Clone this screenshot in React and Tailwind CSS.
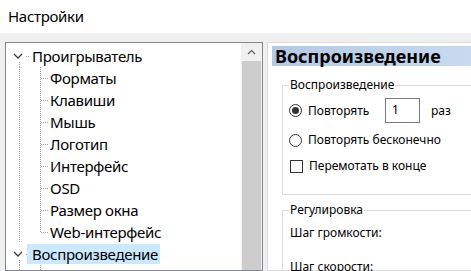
import React from 'react';

const font = { fontFamily: '"Noto Sans", "Open Sans", sans-serif' };

const dot = '#a0a0a0';

// tree gutter for the top-level nodes: chevron + dotted stub
function RootGutter({ last }) {
  return (
    <svg width="26" height="22" className="shrink-0">
      <path d="M8 9 L12 13 L16 9" fill="none" stroke="#404040" strokeWidth="1.3" />
      <line x1="20" y1="11.5" x2="24" y2="11.5" stroke={dot} strokeDasharray="1 1" />
      {!last && <line x1="13.5" y1="17" x2="13.5" y2="22" stroke={dot} strokeDasharray="1 1" />}
    </svg>
  );
}

// tree gutter for children: parent line + own branch
function ChildGutter({ last }) {
  return (
    <svg width="44" height="22" className="shrink-0">
      <line x1="13.5" y1="0" x2="13.5" y2="22" stroke={dot} strokeDasharray="1 1" />
      <line x1="34.5" y1="0" x2="34.5" y2={last ? 11 : 22} stroke={dot} strokeDasharray="1 1" />
      <line x1="35" y1="11.5" x2="43" y2="11.5" stroke={dot} strokeDasharray="1 1" />
    </svg>
  );
}

function TreeRow({ label, root, last, selected }) {
  return (
    <div className="flex h-[22px] items-center">
      {root ? <RootGutter last={last} /> : <ChildGutter last={last} />}
      <span className={`h-[20px] flex items-center pr-[2px] whitespace-nowrap text-[15px] tracking-[-0.3px] text-black ${selected ? 'bg-[#cce8ff] pl-[5px] -ml-[5px]' : ''}`}>
        {label}
      </span>
    </div>
  );
}

function Radio({ checked }) {
  return (
    <span className="w-[13px] h-[13px] rounded-full border border-[#333] bg-white flex items-center justify-center shrink-0">
      {checked && <span className="w-[7px] h-[7px] rounded-full bg-[#333]" />}
    </span>
  );
}

export default function App() {
  const players = ['Форматы', 'Клавиши', 'Мышь', 'Логотип', 'Интерфейс', 'OSD', 'Размер окна', 'Web-интерфейс'];

  return (
    <div className="w-[471px] h-[271px] overflow-hidden bg-[#f0f0f0] flex flex-col" style={font}>
      {/* Title */}
      <div className="h-[33px] bg-white flex items-center pl-[8px] shrink-0">
        <span className="text-[15px] tracking-[-0.3px] text-black">Настройки</span>
      </div>

      <div className="flex flex-1 pt-[9px] pl-[5px] gap-[4px] min-h-0">
        {/* Tree */}
        <div className="w-[258px] shrink-0 border border-[#828790] bg-white flex">
          <div className="flex-1 pt-[2px] overflow-hidden">
            <TreeRow label="Проигрыватель" root />
            {players.map((p, i) => (
              <TreeRow key={p} label={p} last={i === players.length - 1} />
            ))}
            <TreeRow label="Воспроизведение" root selected />
            <TreeRow label="DVD-Video" />
          </div>
          <div className="w-[21px] bg-[#f0f0f0] flex flex-col shrink-0">
            <div className="h-[18px] flex items-center justify-center">
              <svg width="9" height="6">
                <path d="M1 5 L4.5 1.5 L8 5" fill="none" stroke="#606060" strokeWidth="1.2" />
              </svg>
            </div>
            <div className="flex-1 mx-[1px] bg-[#cdcdcd]" />
          </div>
        </div>

        {/* Page */}
        <div className="flex-1 border border-[#dcdcdc] border-r-0 bg-white pt-[3px] pl-[4px] min-w-0">
          <div className="h-[20px] bg-gradient-to-r from-[#b3c9e5] to-[#c9daee] flex items-center pl-[3px]">
            <span className="text-[18px] font-bold text-black whitespace-nowrap">Воспроизведение</span>
          </div>

          <div className="pl-[10px] pt-[11px]">
            <fieldset className="border border-[#dcdcdc] border-r-0 pl-[6px] pb-[16px]">
              <legend className="px-[1px] text-[12px] leading-[16px] text-black">Воспроизведение</legend>
              <div className="flex items-center h-[25px] mt-[5px] text-[12px] text-black">
                <Radio checked />
                <span className="ml-[6px] w-[77px]">Повторять</span>
                <span className="w-[35px] h-[25px] border border-[#7a7a7a] pl-[6px] pt-[2px]">1</span>
                <span className="ml-[11px]">раз</span>
              </div>
              <div className="flex items-center h-[24px] mt-[5px] text-[12px] text-black">
                <Radio />
                <span className="ml-[6px]">Повторять бесконечно</span>
              </div>
              <div className="flex items-center h-[26px] pt-[2px] text-[12px] text-black">
                <span className="w-[13px] h-[13px] border border-[#333] bg-white ml-[1px] shrink-0" />
                <span className="ml-[6px]">Перемотать в конце</span>
              </div>
            </fieldset>

            <fieldset className="mt-[7px] border border-[#dcdcdc] border-r-0 pl-[6px] pb-[10px]">
              <legend className="px-[1px] text-[12px] leading-[16px] text-black">Регулировка</legend>
              <div className="h-[24px] mt-[3px] flex items-center pl-[1px] text-[12px] text-black">Шаг громкости:</div>
              <div className="h-[24px] mt-[10px] flex items-center pl-[1px] text-[12px] text-black">Шаг скорости:</div>
            </fieldset>
          </div>
        </div>
      </div>
    </div>
  );
}
